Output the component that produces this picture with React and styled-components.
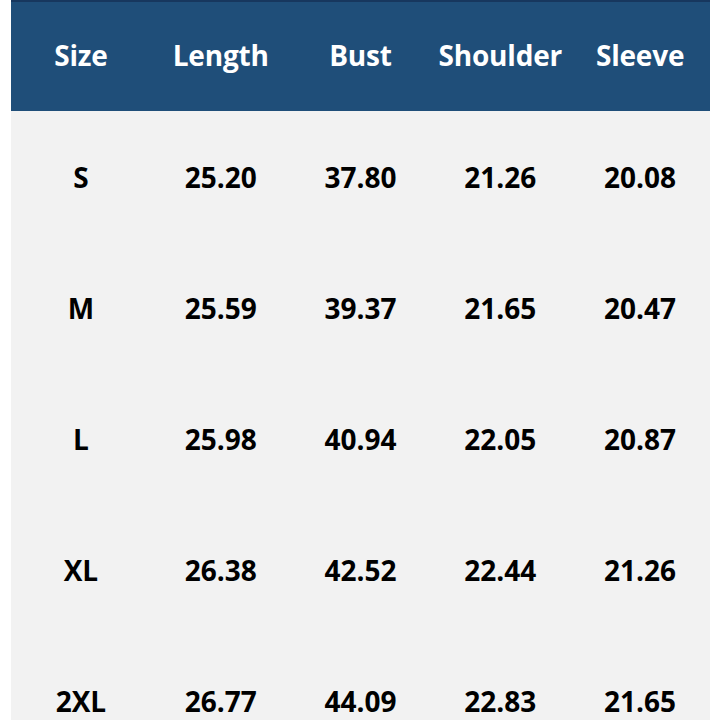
import styled, { createGlobalStyle } from 'styled-components'

const Global = createGlobalStyle`
body {
  margin: 0;
  background: #ffffff;
  font-family: "Open Sans", "Noto Sans", sans-serif;
}
`

const Page = styled.div`
width: 720px;
height: 720px;
overflow: hidden;
padding: 0 10px 0 11px;
box-sizing: border-box;
`

const Table = styled.div`
display: grid;
grid-template-columns: repeat(5, 1fr);
background: #f2f2f2;
`

const HeadCell = styled.div`
height: 111px;
box-sizing: border-box;
padding-bottom: 4px;
display: flex;
align-items: center;
justify-content: center;
background: #1f4e79;
border-top: 2px solid #17375e;
color: #ffffff;
font-weight: 700;
font-size: 28px;
letter-spacing: -0.2px;
`

const Cell = styled.div`
height: 131px;
display: flex;
align-items: center;
justify-content: center;
color: #000000;
font-weight: 700;
font-size: 28px;
`

const headers = ['Size', 'Length', 'Bust', 'Shoulder', 'Sleeve']

const rows = [
  ['S', '25.20', '37.80', '21.26', '20.08'],
  ['M', '25.59', '39.37', '21.65', '20.47'],
  ['L', '25.98', '40.94', '22.05', '20.87'],
  ['XL', '26.38', '42.52', '22.44', '21.26'],
  ['2XL', '26.77', '44.09', '22.83', '21.65'],
]

const App = () => {
  return (
    <Page>
      <Global />
      <Table>
        {headers.map((h) => (
          <HeadCell key={h}>{h}</HeadCell>
        ))}
        {rows.map((r) =>
          r.map((v, i) => <Cell key={r[0] + i}>{v}</Cell>)
        )}
      </Table>
    </Page>
  )
}

export default App
